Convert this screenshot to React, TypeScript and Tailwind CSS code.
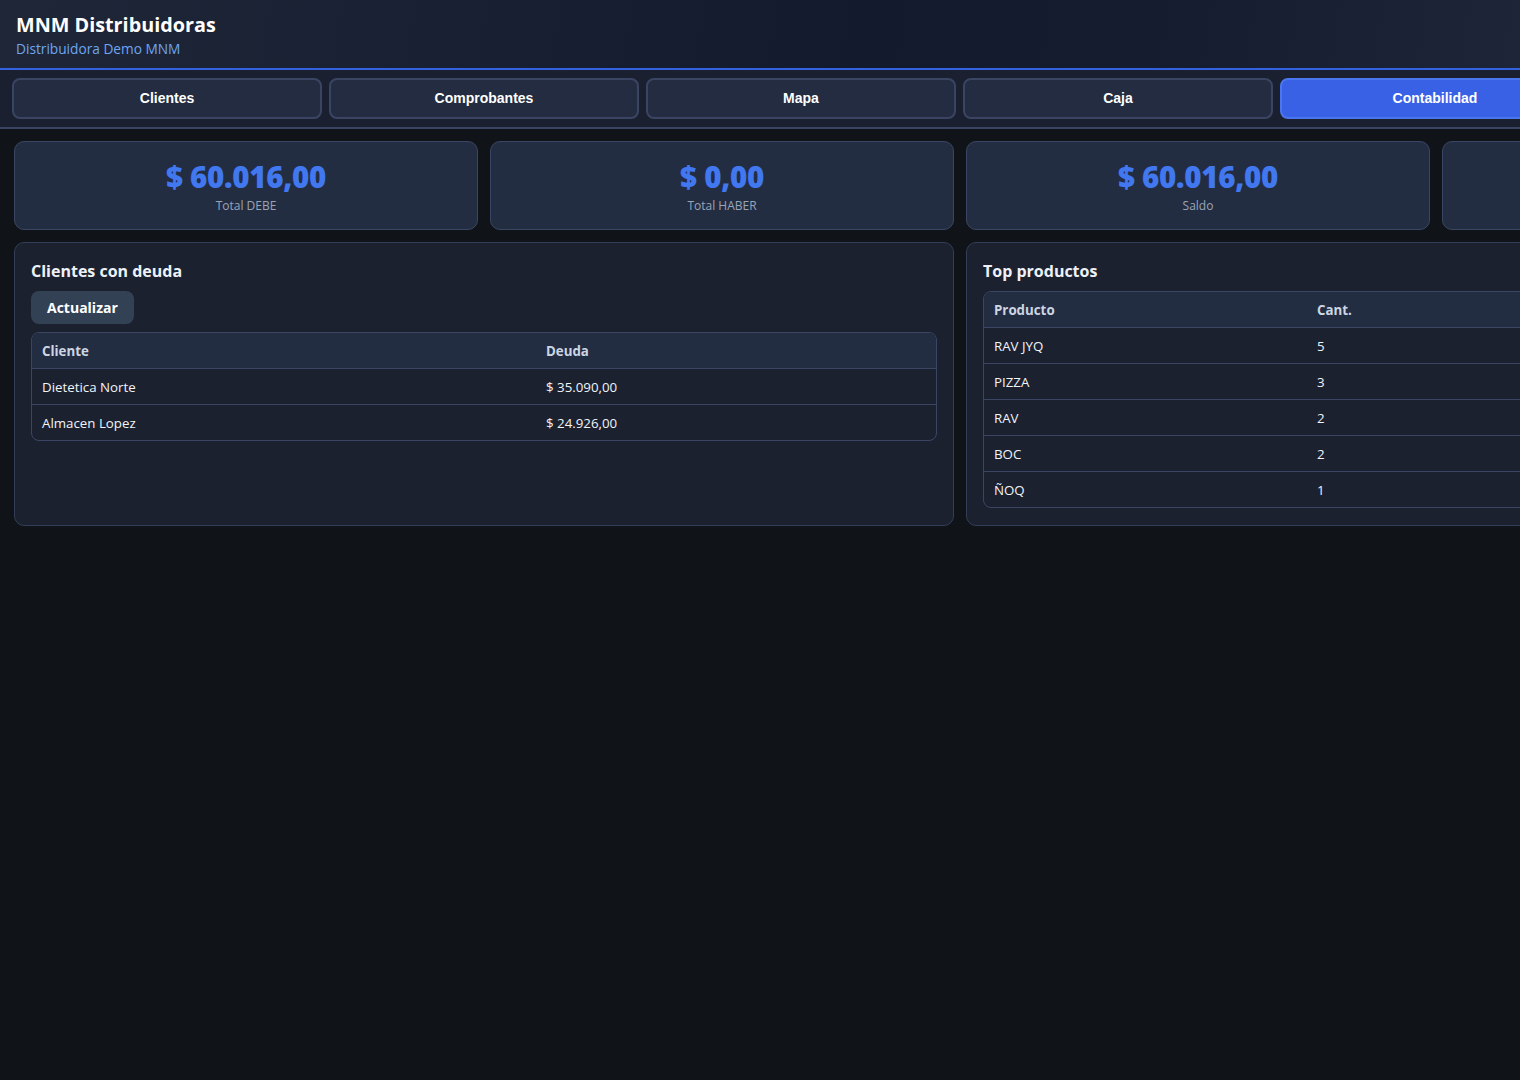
import React from "react";

const tabs = ["Clientes", "Comprobantes", "Mapa", "Caja", "Contabilidad"];
const stats = [
  { v: "$ 60.016,00", l: "Total DEBE" },
  { v: "$ 0,00", l: "Total HABER" },
  { v: "$ 60.016,00", l: "Saldo" },
  { v: "", l: "" },
];
const deudas = [
  ["Dietetica Norte", "$ 35.090,00"],
  ["Almacen Lopez", "$ 24.926,00"],
];
const productos = [
  ["RAV JYQ", "5"],
  ["PIZZA", "3"],
  ["RAV", "2"],
  ["BOC", "2"],
  ["ÑOQ", "1"],
];

const ui = { fontFamily: '"Open Sans", "Noto Sans", sans-serif' };

export default function App() {
  return (
    <div className="w-[1520px] h-[1080px] overflow-hidden bg-[#101419]" style={ui}>
      <div className="w-[1920px]">
        <header className="h-[70px] border-b-2 border-[#3461e0] bg-[linear-gradient(100deg,#1f2638_0%,#141a2d_45%,#161c2f_60%,#262e42_100%)] px-4 pt-[11px]">
          <h1 className="text-[19.8px] font-bold leading-[28px] text-white">MNM Distribuidoras</h1>
          <p className="text-[13.7px] leading-[19px] text-[#6ea6f0]">Distribuidora Demo MNM</p>
        </header>
        <nav className="h-[59px] bg-[#1b2030] border-b-2 border-[#3a4563] flex gap-[7px] px-3 pt-2">
          {tabs.map((t, i) => (
            <button
              key={t}
              className={
                i === 4
                  ? "w-[310px] h-[41px] rounded-[8px] border-2 border-[#4a76f0] bg-[#3861e6] text-white text-[14px] font-bold"
                  : "w-[310px] h-[41px] rounded-[8px] border-2 border-[#3a4563] bg-[#232c40] text-white text-[14px] font-bold"
              }
              style={{ fontFamily: '"Liberation Sans", Arial, sans-serif' }}
            >
              {t}
            </button>
          ))}
        </nav>
        <main className="p-[14px] pt-[12px] grid grid-cols-4 gap-[12px]">
          {stats.map((s, i) => (
            <div
              key={i}
              className="h-[89px] rounded-[10px] border border-[#3a4663] bg-[#232d42] flex flex-col items-center pt-[16px]"
            >
              <div className="text-[29.5px] font-extrabold leading-[38px] text-[#4178f0] tracking-[-0.3px]">{s.v}</div>
              <div className="text-[12px] leading-[16px] text-[#9aa4b8] mt-[2px]">{s.l}</div>
            </div>
          ))}
          <section className="col-span-2 h-[284px] rounded-[10px] border border-[#333e58] bg-[#1c2130] px-4 pt-[16px]">
            <h2 className="text-[16px] font-bold leading-[24px] text-[#eef2f8]">Clientes con deuda</h2>
            <button className="mt-[8px] h-[33px] px-4 rounded-[8px] bg-[#334155] text-white text-[14px] font-bold">
              Actualizar
            </button>
            <div className="mt-[8px] rounded-[8px] border border-[#3a4663] overflow-hidden">
              <table className="w-full text-left text-[13.3px] border-collapse">
                <thead>
                  <tr className="bg-[#232d42] h-[35px]">
                    <th className="w-[504px] px-[10px] pt-[4px] font-bold text-[#cdd5e2]">Cliente</th>
                    <th className="px-[10px] pt-[4px] font-bold text-[#cdd5e2]">Deuda</th>
                  </tr>
                </thead>
                <tbody>
                  {deudas.map((r) => (
                    <tr key={r[0]} className="h-[36px] border-t border-[#3a4663] text-[#f1f4f9]">
                      <td className="px-[10px] pt-[4px]">{r[0]}</td>
                      <td className="px-[10px] pt-[4px]">{r[1]}</td>
                    </tr>
                  ))}
                </tbody>
              </table>
            </div>
          </section>
          <section className="col-span-2 h-[284px] rounded-[10px] border border-[#333e58] bg-[#1c2130] px-4 pt-[16px]">
            <h2 className="text-[16px] font-bold leading-[24px] text-[#eef2f8]">Top productos</h2>
            <div className="mt-[8px] rounded-[8px] border border-[#3a4663] overflow-hidden">
              <table className="w-full text-left text-[13.3px] border-collapse">
                <thead>
                  <tr className="bg-[#232d42] h-[35px]">
                    <th className="w-[323px] px-[10px] pt-[4px] font-bold text-[#cdd5e2]">Producto</th>
                    <th className="px-[10px] pt-[4px] font-bold text-[#cdd5e2]">Cant.</th>
                  </tr>
                </thead>
                <tbody>
                  {productos.map((r) => (
                    <tr key={r[0]} className="h-[36px] border-t border-[#3a4663] text-[#f1f4f9]">
                      <td className="px-[10px] pt-[4px]">{r[0]}</td>
                      <td className="px-[10px] pt-[4px]">{r[1]}</td>
                    </tr>
                  ))}
                </tbody>
              </table>
            </div>
          </section>
        </main>
      </div>
    </div>
  );
}
